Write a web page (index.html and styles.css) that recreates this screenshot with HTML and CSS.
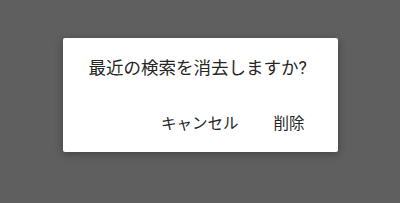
FILE: index.html
```html
<!DOCTYPE html>
<html lang="ja">
<head>
    <meta charset="UTF-8">
    <meta name="viewport" content="width=device-width, initial-scale=1.0">
    <title>検索履歴の消去</title>
    <link rel="stylesheet" href="styles.css">
</head>
<body>
    <div class="dialog">
        <div class="dialog-title">最近の検索を消去しますか?</div>
        <div class="dialog-actions">
            <button class="dialog-button">キャンセル</button>
            <button class="dialog-button">削除</button>
        </div>
    </div>
</body>
</html>
```

FILE: styles.css
```css
body {
    margin: 0;
    padding-top: 38px;
    height: 203px;
    box-sizing: border-box;
    background-color: #5f5f5f;
    font-family: Roboto, "Noto Sans CJK JP", sans-serif;
    color: #262626;
}

.dialog {
    width: 275px;
    height: 114px;
    margin: 0 auto;
    box-sizing: border-box;
    background-color: #ffffff;
    border-radius: 2px;
    box-shadow: 0 2px 8px rgba(0, 0, 0, 0.3);
    padding: 18px 0 0 26px;
}

.dialog-title {
    font-size: 17.5px;
    line-height: 24px;
}

.dialog-actions {
    display: flex;
    justify-content: flex-end;
    gap: 19px;
    margin-top: 29px;
    padding-right: 25px;
}

.dialog-button {
    border: none;
    background: none;
    padding: 4px 8px;
    font-family: inherit;
    font-size: 15.5px;
    line-height: 22px;
    color: #262626;
}
```
